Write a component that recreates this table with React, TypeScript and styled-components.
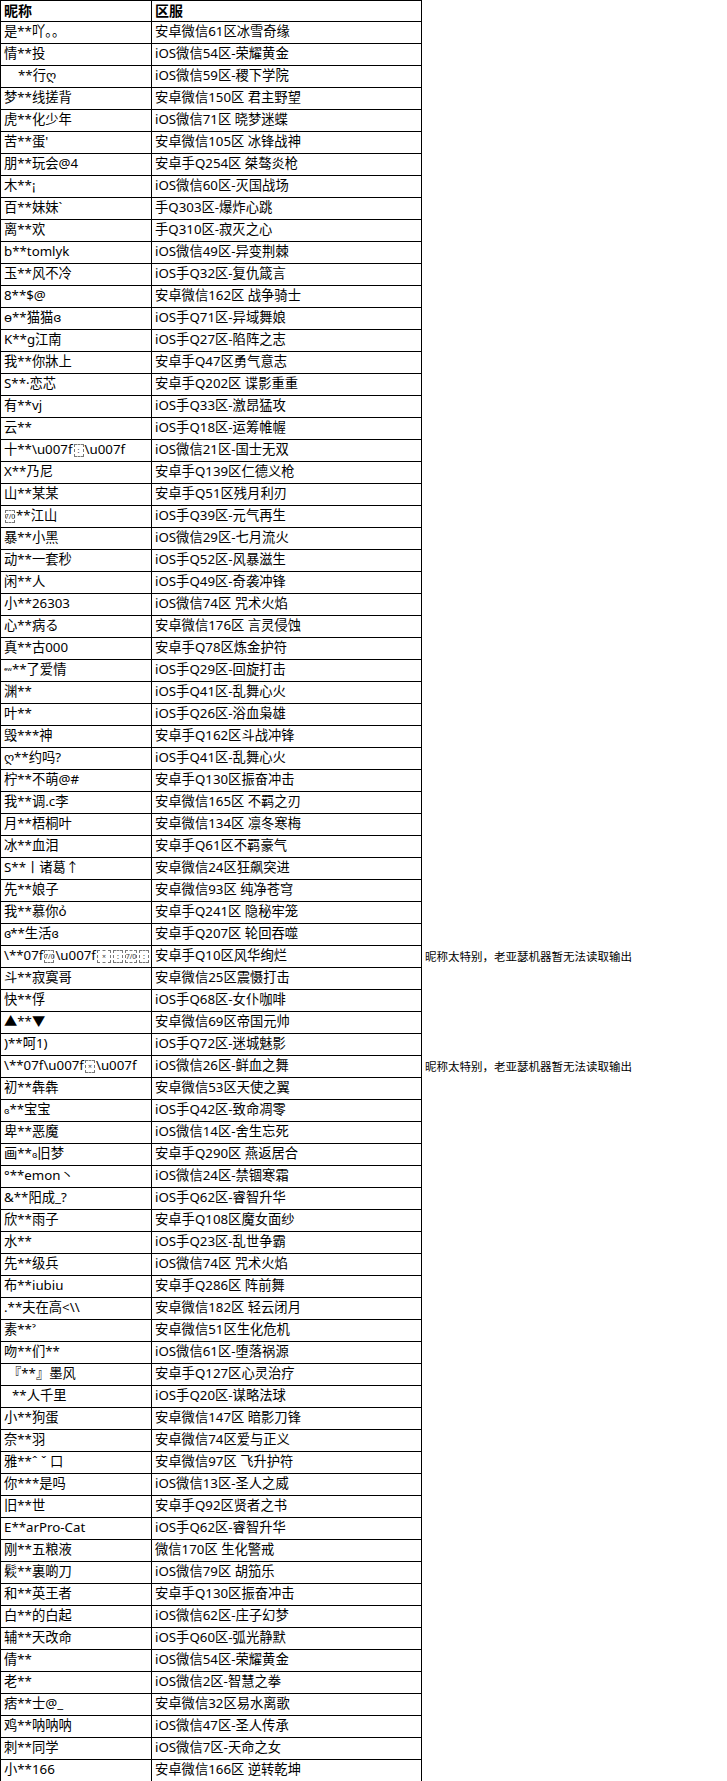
import React from "react";
import styled, { createGlobalStyle } from "styled-components";

const Global = createGlobalStyle`
  html, body { margin: 0; padding: 0; background: #fff; }
  body { font-family: "Noto Sans", "Noto Sans CJK SC", sans-serif; color: #000; }
`;

const Sheet = styled.div`
  display: grid;
  grid-template-columns: 152px 270px 1fr;
  width: 727px;
  font-size: 13.3px;
`;

const Cell = styled.div<{ $first?: boolean; $head?: boolean; $indent?: number }>`
  box-sizing: border-box;
  height: 22px;
  display: flex;
  align-items: center;
  padding: 0 0 1px ${(p) => 3 + (p.$indent || 0)}px;
  border-right: 1px solid #000;
  border-bottom: 1px solid #000;
  border-left: ${(p) => (p.$first ? "1px solid #000" : "none")};
  border-top: ${(p) => (p.$head ? "1px solid #000" : "none")};
  font-weight: ${(p) => (p.$head ? 700 : 400)};
  font-size: ${(p) => (p.$head ? "14px" : "13.3px")};
  white-space: nowrap;
  overflow: hidden;
  line-height: 1;
`;

const NoteCell = styled.div`
  box-sizing: border-box;
  height: 22px;
  display: flex;
  align-items: center;
  padding: 0 0 1px 3px;
  white-space: nowrap;
  font-size: 11.5px;
  line-height: 1;
`;

const CtrlBox = styled.span<{ $w?: number }>`
  display: inline-flex;
  align-items: center;
  justify-content: center;
  box-sizing: border-box;
  width: ${(p) => p.$w || 10}px;
  height: 13px;
  border: 1px dashed #777;
  font-size: 7px;
  color: #333;
  margin: 0 1px;
  vertical-align: middle;
`;

const Tiny = styled.span`
  font-size: 9px;
`;

const Swirl = styled.span`
  font-size: 12px;
  letter-spacing: -1px;
`;

type Row = { name: React.ReactNode; server: string; note?: string; indent?: number };

const NOTE = "昵称太特别，老亚瑟机器暂无法读取输出";

const rows: Row[] = [
  { name: "是**吖。。", server: "安卓微信61区冰雪奇缘" },
  { name: "情**投", server: "iOS微信54区-荣耀黄金" },
  { name: "**行ღ", server: "iOS微信59区-稷下学院", indent: 14 },
  { name: "梦**线搓背", server: "安卓微信150区 君主野望" },
  { name: "虎**化少年", server: "iOS微信71区 晓梦迷蝶" },
  { name: "苦**蛋'", server: "安卓微信105区 冰锋战神" },
  { name: "朋**玩会@4", server: "安卓手Q254区 桀骜炎枪" },
  { name: "木**¡", server: "iOS微信60区-灭国战场" },
  { name: "百**妹妹`", server: "手Q303区-爆炸心跳" },
  { name: "离**欢", server: "手Q310区-寂灭之心" },
  { name: "b**tomlyk", server: "iOS微信49区-异变荆棘" },
  { name: "玉**风不冷", server: "iOS手Q32区-复仇箴言" },
  { name: "8**$@", server: "安卓微信162区 战争骑士" },
  { name: "ɵ**猫猫ɞ", server: "iOS手Q71区-异域舞娘" },
  { name: "K**g江南", server: "iOS手Q27区-陷阵之志" },
  { name: "我**你牀上", server: "安卓手Q47区勇气意志" },
  { name: "S**·恋芯", server: "安卓手Q202区 谍影重重" },
  { name: "有**vj", server: "iOS手Q33区-激昂猛攻" },
  { name: "云**", server: "iOS手Q18区-运筹帷幄" },
  {
    name: (
      <>
        十**\u007f<CtrlBox>:</CtrlBox>\u007f
      </>
    ),
    server: "iOS微信21区-国士无双",
  },
  { name: "X**乃尼", server: "安卓手Q139区仁德义枪" },
  { name: "山**某某", server: "安卓手Q51区残月利刃" },
  {
    name: (
      <>
        <CtrlBox>7/0</CtrlBox>**江山
      </>
    ),
    server: "iOS手Q39区-元气再生",
  },
  { name: "暴**小黑", server: "iOS微信29区-七月流火" },
  { name: "动**一套秒", server: "iOS手Q52区-风暴滋生" },
  { name: "闲**人", server: "iOS手Q49区-奇袭冲锋" },
  { name: "小**26303", server: "iOS微信74区 咒术火焰" },
  { name: "心**病る", server: "安卓微信176区 言灵侵蚀" },
  { name: "真**古000", server: "安卓手Q78区炼金护符" },
  {
    name: (
      <>
        <Tiny>ᵉʷ</Tiny>**了爱情
      </>
    ),
    server: "iOS手Q29区-回旋打击",
  },
  { name: "渊**", server: "iOS手Q41区-乱舞心火" },
  { name: "叶**", server: "iOS手Q26区-浴血枭雄" },
  { name: "毁***神", server: "安卓手Q162区斗战冲锋" },
  { name: "ღ**约吗?", server: "iOS手Q41区-乱舞心火" },
  { name: "柠**不萌@#", server: "安卓手Q130区振奋冲击" },
  { name: "我**调.c李", server: "安卓微信165区 不羁之刃" },
  { name: "月**梧桐叶", server: "安卓微信134区 凛冬寒梅" },
  { name: "冰**血泪", server: "安卓手Q61区不羁豪气" },
  { name: "S**丨诸葛↑", server: "安卓微信24区狂飙突进" },
  { name: "先**娘子", server: "安卓微信93区 纯净苍穹" },
  { name: "我**慕你ỏ", server: "安卓手Q241区 隐秘牢笼" },
  {
    name: (
      <>
        <Swirl>ɞ</Swirl>**生活<Swirl>ɞ</Swirl>
      </>
    ),
    server: "安卓手Q207区 轮回吞噬",
  },
  {
    name: (
      <>
        \**07f<CtrlBox>7/0</CtrlBox>\u007f<CtrlBox $w={14}>×</CtrlBox>
        <CtrlBox>:</CtrlBox>
        <CtrlBox $w={12}>7/0</CtrlBox>
        <CtrlBox>:</CtrlBox>
      </>
    ),
    server: "安卓手Q10区风华绚烂",
    note: NOTE,
  },
  { name: "斗**寂寞哥", server: "安卓微信25区震慑打击" },
  { name: "快**俘", server: "iOS手Q68区-女仆咖啡" },
  { name: "▲**▼", server: "安卓微信69区帝国元帅" },
  { name: ")**呵1)", server: "iOS手Q72区-迷城魅影" },
  {
    name: (
      <>
        \**07f\u007f<CtrlBox>×</CtrlBox>\u007f
      </>
    ),
    server: "iOS微信26区-鲜血之舞",
    note: NOTE,
  },
  { name: "初**犇犇", server: "安卓微信53区天使之翼" },
  {
    name: (
      <>
        <Tiny>ɞ</Tiny>**宝宝
      </>
    ),
    server: "iOS手Q42区-致命凋零",
  },
  { name: "卑**恶魔", server: "iOS微信14区-舍生忘死" },
  {
    name: (
      <>
        画**<Tiny>ɞ</Tiny>旧梦
      </>
    ),
    server: "安卓手Q290区 燕返居合",
  },
  { name: "°**emon丶", server: "iOS微信24区-禁锢寒霜" },
  { name: "&**阳成_?", server: "iOS手Q62区-睿智升华" },
  { name: "欣**雨子", server: "安卓手Q108区魔女面纱" },
  { name: "水**", server: "iOS手Q23区-乱世争霸" },
  { name: "先**级兵", server: "iOS微信74区 咒术火焰" },
  { name: "布**iubiu", server: "安卓手Q286区 阵前舞" },
  { name: ".**夫在高<\\\\", server: "安卓微信182区 轻云闭月" },
  { name: "素**ˀ", server: "安卓微信51区生化危机" },
  { name: "吻**们**", server: "iOS微信61区-堕落祸源" },
  { name: "『**』墨风", server: "安卓手Q127区心灵治疗", indent: 4 },
  { name: "**人千里", server: "iOS手Q20区-谋略法球", indent: 8 },
  { name: "小**狗蛋", server: "安卓微信147区 暗影刀锋" },
  { name: "奈**羽", server: "安卓微信74区爱与正义" },
  { name: "雅**ˆ ˇ 口", server: "安卓微信97区 飞升护符" },
  { name: "你***是吗", server: "iOS微信13区-圣人之威" },
  { name: "旧**世", server: "安卓手Q92区贤者之书" },
  { name: "E**arPro-Cat", server: "iOS手Q62区-睿智升华" },
  { name: "刚**五粮液", server: "微信170区 生化警戒" },
  { name: "鬏**裏啲刀", server: "iOS微信79区 胡笳乐" },
  { name: "和**英王者", server: "安卓手Q130区振奋冲击" },
  { name: "白**的白起", server: "iOS微信62区-庄子幻梦" },
  { name: "辅**天改命", server: "iOS手Q60区-弧光静默" },
  { name: "倩**", server: "iOS微信54区-荣耀黄金" },
  { name: "老**", server: "iOS微信2区-智慧之拳" },
  { name: "痞**士@_", server: "安卓微信32区易水离歌" },
  { name: "鸡**呐呐呐", server: "iOS微信47区-圣人传承" },
  { name: "刺**同学", server: "iOS微信7区-天命之女" },
  { name: "小**166", server: "安卓微信166区 逆转乾坤" },
];

export default function App() {
  return (
    <>
      <Global />
      <Sheet>
        <Cell $first $head>昵称</Cell>
        <Cell $head>区服</Cell>
        <NoteCell />
        {rows.map((r, i) => (
          <React.Fragment key={i}>
            <Cell $first $indent={r.indent}>{r.name}</Cell>
            <Cell>{r.server}</Cell>
            <NoteCell>{r.note || ""}</NoteCell>
          </React.Fragment>
        ))}
      </Sheet>
    </>
  );
}
